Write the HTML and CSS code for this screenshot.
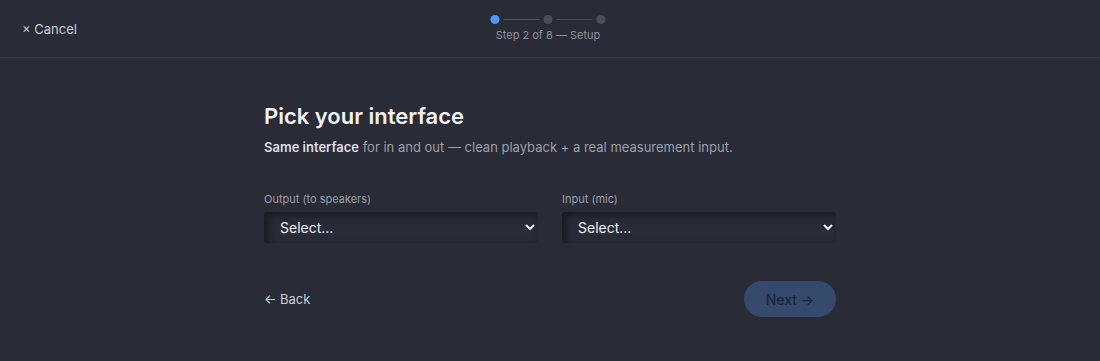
FILE: index.html
```html
<!DOCTYPE html>
<html lang="en">
<head>
    <meta charset="UTF-8">
    <meta name="viewport" content="width=device-width, initial-scale=1">
    <title>Setup</title>
    <link rel="stylesheet" href="styles.css">
</head>
<body>
<header class="topbar">
    <button class="cancel">&times; Cancel</button>
    <div class="stepper">
        <div class="dots">
            <span class="dot active"></span>
            <span class="line done"></span>
            <span class="dot"></span>
            <span class="line"></span>
            <span class="dot"></span>
        </div>
        <div class="step-label">Step 2 of 8 — Setup</div>
    </div>
</header>
<main class="content">
    <h1>Pick your interface</h1>
    <p class="lead"><strong>Same interface</strong> for in and out — clean playback + a real measurement input.</p>
    <div class="fields">
        <label class="field">
            <span class="field-label">Output (to speakers)</span>
            <select><option>Select...</option></select>
        </label>
        <label class="field">
            <span class="field-label">Input (mic)</span>
            <select><option>Select...</option></select>
        </label>
    </div>
    <div class="actions">
        <button class="back">&larr; Back</button>
        <button class="next" disabled>Next &rarr;</button>
    </div>
</main>
</body>
</html>
```

FILE: styles.css
```css
* {
    padding: 0;
    margin: 0;
    box-sizing: border-box;
}
body {
    background: #292b37;
    color: #e6e7ec;
    font-family: Inter, "Liberation Sans", sans-serif;
    height: 361px;
}
button {
    font-family: inherit;
    background: none;
    border: none;
    cursor: pointer;
}
.topbar {
    position: relative;
    height: 58px;
    border-bottom: 1px solid #343744;
    display: flex;
    align-items: center;
    padding: 0 22px;
}
.cancel {
    color: #c9cbd4;
    font-size: 13px;
}
.stepper {
    position: absolute;
    left: 50%;
    top: 15px;
    transform: translateX(calc(-50% - 2px));
    display: flex;
    flex-direction: column;
    align-items: center;
}
.dots {
    display: flex;
    align-items: center;
    gap: 4px;
}
.dot {
    width: 9px;
    height: 9px;
    border-radius: 50%;
    background: #4b4e5a;
}
.dot.active {
    background: #4a9bf5;
}
.line {
    width: 36px;
    height: 1px;
    background: #44475a;
}
.line.done {
    background: #3b5a88;
}
.step-label {
    margin-top: 4px;
    font-size: 11px;
    color: #8e919c;
}
.content {
    width: 572px;
    margin: 0 auto;
    padding-top: 44px;
}
h1 {
    font-size: 22px;
    font-weight: 600;
    color: #f2f2f5;
    line-height: 28px;
}
.lead {
    margin-top: 8px;
    font-size: 13px;
    line-height: 18px;
    color: #9c9fab;
}
.lead strong {
    color: #dddee4;
    font-weight: 600;
}
.fields {
    margin-top: 36px;
    display: grid;
    grid-template-columns: 1fr 1fr;
    gap: 24px;
}
.field {
    display: flex;
    flex-direction: column;
}
.field-label {
    font-size: 11px;
    line-height: 14px;
    color: #9a9daa;
    margin-bottom: 6px;
}
select {
    color-scheme: dark;
    height: 31px;
    padding: 0 10px 0 12px;
    border: none;
    border-radius: 3px;
    background: #292b37;
    box-shadow: inset 4px 3px 8px rgba(0, 0, 0, 0.45);
    color: #eeeff3;
    font-family: inherit;
    font-size: 14px;
}
.actions {
    margin-top: 38px;
    display: flex;
    justify-content: space-between;
    align-items: center;
}
.back {
    color: #c9cbd4;
    font-size: 13px;
}
.next {
    width: 92px;
    height: 36px;
    border-radius: 18px;
    background: #34496c;
    color: #1c2535;
    font-size: 14px;
    font-weight: 500;
    cursor: default;
}
```
